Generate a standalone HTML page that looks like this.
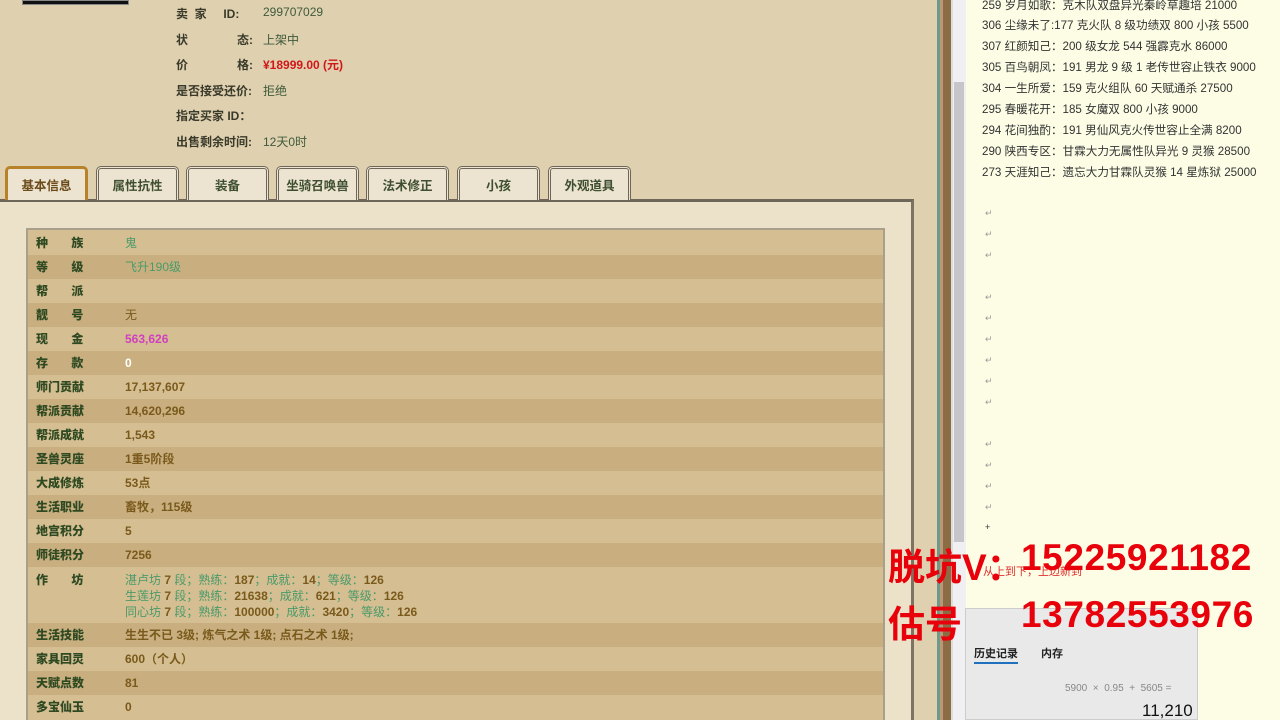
<!DOCTYPE html><html><head><meta charset="utf-8"><style>
*{margin:0;padding:0;box-sizing:border-box}
html,body{width:1280px;height:720px;overflow:hidden}
body{background:#dfd0b0;font-family:"Liberation Sans","Noto Sans CJK SC",sans-serif;position:relative;font-size:12px}
.a{position:absolute}
.info div{position:absolute;left:176px;color:#3a3a2a;font-weight:bold;font-size:12px}
.info span{position:absolute;left:87px;font-weight:normal;color:#3e5a3a;white-space:nowrap}
.tab{position:absolute;top:166px;height:34px;width:83px;background:#ece4d0;border:3px double #6e6658;border-bottom:none;border-radius:5px 5px 0 0;text-align:center;line-height:34px;font-weight:bold;color:#3e4e30;font-size:12.5px}
.row{position:absolute;left:28px;width:855px;height:24px;line-height:24px;font-weight:bold;font-size:12px}
.row b{position:absolute;left:8px;color:#2f4a22;letter-spacing:0}
.row i{position:absolute;left:97px;font-style:normal;color:#7a5a1c;white-space:nowrap}
.d{background:#d5be91}.e{background:#c9af7f}
.g{color:#4a9a6a!important;font-weight:normal}
.doc div{position:absolute;left:982px;font-size:11.6px;color:#333;white-space:nowrap}
.rt{position:absolute;left:985px;font-size:9px;color:#999}
.big{position:absolute;color:#e8000a;font-weight:bold;font-size:37px;white-space:nowrap}
</style></head><body>
<div class="a" style="left:22px;top:0;width:107px;height:5px;background:#111;border:1px solid #888"></div>
<div class="info">
<div style="top:5px">卖&nbsp;&nbsp;家&nbsp;&nbsp;&nbsp;&nbsp;&nbsp;ID:<span style="left:87px">299707029</span></div>
<div style="top:31px">状<span style="left:61px;color:#3a3a2a;font-weight:bold">态:</span><span>上架中</span></div>
<div style="top:56px">价<span style="left:61px;color:#3a3a2a;font-weight:bold">格:</span><span style="color:#d01818;font-weight:bold">¥18999.00 (元)</span></div>
<div style="top:82px">是否接受还价:<span>拒绝</span></div>
<div style="top:107px">指定买家 ID：</div>
<div style="top:133px">出售剩余时间:<span>12天0时</span></div>
</div>
<div class="a" style="left:0;top:199px;width:914px;height:521px;background:#ebe2c9;border-top:3px solid #6e6658;border-right:3px solid #7d7360"></div>
<div class="tab" style="left:5px;border:3px solid #b8822a;border-bottom:none;color:#6a4a1a">基本信息</div>
<div class="tab" style="left:96px">属性抗性</div>
<div class="tab" style="left:186px">装备</div>
<div class="tab" style="left:276px">坐骑召唤兽</div>
<div class="tab" style="left:366px">法术修正</div>
<div class="tab" style="left:457px">小孩</div>
<div class="tab" style="left:548px">外观道具</div>
<div class="a" style="left:26px;top:228px;width:859px;height:492px;background:#d5be91;border:2px solid #a8a08a;border-bottom:none"></div>
<div class="row d" style="top:231px"><b>种&nbsp;&nbsp;&nbsp;&nbsp;&nbsp;&nbsp;&nbsp;族</b><i class="g">鬼</i></div>
<div class="row e" style="top:255px"><b>等&nbsp;&nbsp;&nbsp;&nbsp;&nbsp;&nbsp;&nbsp;级</b><i class="g">飞升190级</i></div>
<div class="row d" style="top:279px"><b>帮&nbsp;&nbsp;&nbsp;&nbsp;&nbsp;&nbsp;&nbsp;派</b></div>
<div class="row e" style="top:303px"><b>靓&nbsp;&nbsp;&nbsp;&nbsp;&nbsp;&nbsp;&nbsp;号</b><i style="font-weight:normal">无</i></div>
<div class="row d" style="top:327px"><b>现&nbsp;&nbsp;&nbsp;&nbsp;&nbsp;&nbsp;&nbsp;金</b><i style="color:#d040c0">563,626</i></div>
<div class="row e" style="top:351px"><b>存&nbsp;&nbsp;&nbsp;&nbsp;&nbsp;&nbsp;&nbsp;款</b><i style="color:#fff">0</i></div>
<div class="row d" style="top:375px"><b>师门贡献</b><i>17,137,607</i></div>
<div class="row e" style="top:399px"><b>帮派贡献</b><i>14,620,296</i></div>
<div class="row d" style="top:423px"><b>帮派成就</b><i>1,543</i></div>
<div class="row e" style="top:447px"><b>圣兽灵座</b><i>1重5阶段</i></div>
<div class="row d" style="top:471px"><b>大成修炼</b><i>53点</i></div>
<div class="row e" style="top:495px"><b>生活职业</b><i>畜牧，115级</i></div>
<div class="row d" style="top:519px"><b>地宫积分</b><i>5</i></div>
<div class="row e" style="top:543px"><b>师徒积分</b><i>7256</i></div>
<div class="row d" style="top:567px;height:56px;line-height:16px"><b style="top:5px">作&nbsp;&nbsp;&nbsp;&nbsp;&nbsp;&nbsp;&nbsp;坊</b><i style="top:5px"><span class="g">湛卢坊</span> 7 <span class="g">段；熟练：</span>187<span class="g">；成就：</span>14<span class="g">；等级：</span>126<br><span class="g">生莲坊</span> 7 <span class="g">段；熟练：</span>21638<span class="g">；成就：</span>621<span class="g">；等级：</span>126<br><span class="g">同心坊</span> 7 <span class="g">段；熟练：</span>100000<span class="g">；成就：</span>3420<span class="g">；等级：</span>126</i></div>
<div class="row e" style="top:623px"><b>生活技能</b><i>生生不已 3级; 炼气之术 1级; 点石之术 1级;</i></div>
<div class="row d" style="top:647px"><b>家具回灵</b><i>600（个人）</i></div>
<div class="row e" style="top:671px"><b>天赋点数</b><i>81</i></div>
<div class="row d" style="top:695px;height:25px"><b>多宝仙玉</b><i>0</i></div>
<div class="a" style="left:937px;top:0;width:3px;height:720px;background:#6f9a8a"></div>
<div class="a" style="left:940px;top:0;width:3px;height:720px;background:#b89878"></div>
<div class="a" style="left:943px;top:0;width:8px;height:720px;background:#8c6c44"></div>
<div class="a" style="left:951px;top:0;width:15px;height:720px;background:#f0f0f3;border-left:2px solid #ddd"></div>
<div class="a" style="left:954px;top:82px;width:10px;height:460px;background:#c6c6ca"></div>
<div class="a" style="left:966px;top:0;width:314px;height:720px;background:#fdfde6"></div>
<div class="doc">
<div style="top:-3px">259 岁月如歌：克木队双盘异光秦岭草趣培 21000</div>
<div style="top:17px">306 尘缘未了:177 克火队 8 级功绩双 800 小孩 5500</div>
<div style="top:38px">307 红颜知己：200 级女龙 544 强霹克水 86000</div>
<div style="top:59px">305 百鸟朝凤：191 男龙 9 级 1 老传世容止铁衣 9000</div>
<div style="top:80px">304 一生所爱：159 克火组队 60 天赋通杀 27500</div>
<div style="top:101px">295 春暖花开：185 女魔双 800 小孩 9000</div>
<div style="top:122px">294 花间独酌：191 男仙风克火传世容止全满 8200</div>
<div style="top:143px">290 陕西专区：甘霖大力无属性队异光 9 灵猴 28500</div>
<div style="top:164px">273 天涯知己：遗忘大力甘霖队灵猴 14 星炼狱 25000</div>
</div>
<div class="rt" style="top:208px">↵</div><div class="rt" style="top:229px">↵</div><div class="rt" style="top:250px">↵</div><div class="rt" style="top:292px">↵</div><div class="rt" style="top:313px">↵</div><div class="rt" style="top:334px">↵</div><div class="rt" style="top:355px">↵</div><div class="rt" style="top:376px">↵</div><div class="rt" style="top:397px">↵</div><div class="rt" style="top:439px">↵</div><div class="rt" style="top:460px">↵</div><div class="rt" style="top:481px">↵</div><div class="rt" style="top:502px">↵</div><div class="rt" style="top:522px;color:#333">+</div>
<div class="a" style="left:983px;top:563px;color:#e03030;font-size:11px">从上到下，上边新到</div>
<div class="a" style="left:965px;top:608px;width:233px;height:112px;background:#e9e9ea;border:1px solid #ccc"></div>
<div class="a" style="left:974px;top:645px;font-size:11px;font-weight:bold;color:#222">历史记录</div>
<div class="a" style="left:974px;top:662px;width:44px;height:2px;background:#2070c0"></div>
<div class="a" style="left:1041px;top:645px;font-size:11px;font-weight:bold;color:#222">内存</div>
<div class="a" style="left:1065px;top:683px;font-size:10px;color:#888;white-space:nowrap">5900 &nbsp;× &nbsp;0.95 &nbsp;+ &nbsp;5605 =</div>
<div class="a" style="left:1142px;top:701px;font-size:17px;color:#111">11,210</div>
<div class="big" style="left:888px;top:537px">脱坑V：</div>
<div class="big" style="left:1021px;top:537px;letter-spacing:0.6px">15225921182</div>
<div class="big" style="left:888px;top:594px">估号</div>
<div class="big" style="left:1021px;top:594px;letter-spacing:0.6px">13782553976</div>
</body></html>
